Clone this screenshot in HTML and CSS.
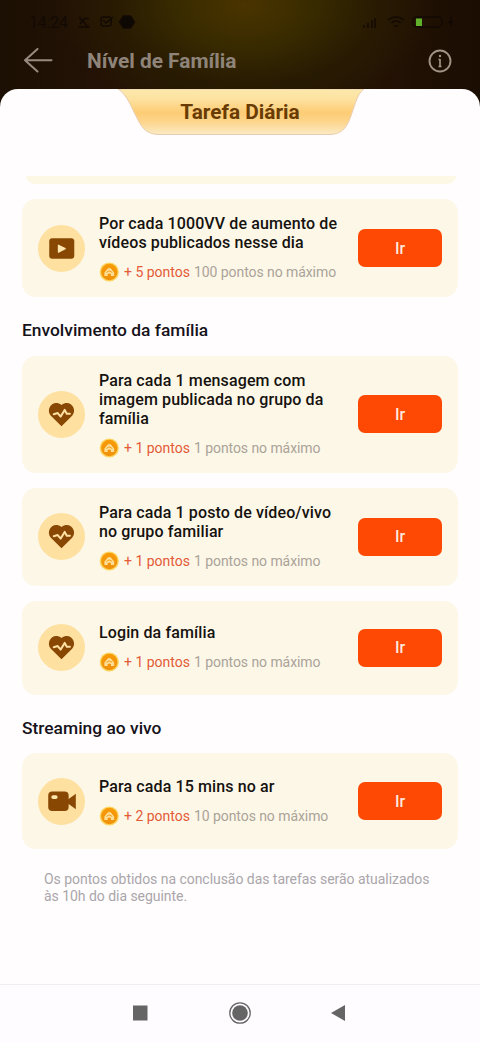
FILE: index.html
```html
<!DOCTYPE html>
<html lang="pt">
<head>
<meta charset="utf-8">
<title>Nível de Família</title>
<link rel="stylesheet" href="styles.css">
</head>
<body>
<svg class="defs" width="0" height="0">
  <defs>
    <linearGradient id="coin-fill" x1="0" y1="0" x2="0" y2="1"><stop offset="0" stop-color="#f99a08"/><stop offset="1" stop-color="#ef920c"/></linearGradient>
    <linearGradient id="tab-fill" x1="0" y1="0" x2="0" y2="1"><stop offset="0" stop-color="#fbe9ad"/><stop offset=".22" stop-color="#fde2a0"/><stop offset=".52" stop-color="#fdcc75"/><stop offset=".72" stop-color="#fdd58c"/><stop offset="1" stop-color="#fbebc4"/></linearGradient>
    <symbol id="coin" viewBox="0 0 20 20">
      <circle cx="10.3" cy="10" r="9.6" fill="#fbd45c"/>
      <circle cx="10.3" cy="10" r="8.2" fill="url(#coin-fill)"/>
      <path d="M5.4 14V10.6L8.8 6.6Q10.3 5.4 11.8 6.6L15.2 10.6V14H12V12.2Q10.3 10.6 8.6 12.2V14Z" fill="#ffdf98"/>
      <path d="M7.4 10.4Q10.3 7.4 13.2 10.4" fill="none" stroke="#f5a01c" stroke-width="1"/>
    </symbol>
    <symbol id="play" viewBox="0 0 46 46">
      <rect x="11" y="13" width="24.5" height="20" rx="3" fill="#894704"/>
      <path d="M20 19.8L26.6 23.1L20 26.6Z" fill="#ffe5ae" stroke="#ffe5ae" stroke-width="1.2" stroke-linejoin="round"/>
    </symbol>
    <symbol id="heart" viewBox="0 0 46 46">
      <path d="M23 34.5L12.6 24.2C6.9 18.1 14.8 7.4 23 13.8C31.2 7.4 39.1 18.1 33.4 24.2Z" fill="#894704"/>
      <path d="M15.4 22.8L19.3 21.6L22.2 25L26.1 18.5L28.2 22.2H31.2" fill="none" stroke="#ffe0a2" stroke-width="2" stroke-linejoin="round" stroke-linecap="round"/>
    </symbol>
    <symbol id="camera" viewBox="0 0 46 46">
      <rect x="10" y="13.3" width="20" height="19" rx="4" fill="#894704"/>
      <path d="M29 21.4L37 15.4V30.6L29 24.8Z" fill="#894704"/>
      <rect x="13" y="16.8" width="6.2" height="3.8" rx="1.9" fill="#ffe5ae"/>
    </symbol>
  </defs>
</svg>
<div class="screen">
  <header class="top">
    <div class="status">
      <span class="clock">14:24</span>
      <svg class="status-left" width="64" height="16" viewBox="0 0 64 16" fill="none" stroke="#130a04" stroke-width="1.5"><path d="M3 3l9 10M4 10q5-8 9-5M2 13h12"/><rect x="25" y="3" width="10" height="9" rx="2"/><path d="M27 6l3 3 7-6"/><path d="M47.500 2h7l4 6-4 6h-7l-4-6z" fill="#0e0804"/></svg>
      <svg class="status-right" width="96" height="16" viewBox="0 0 96 16" fill="none" stroke="#130a04" stroke-width="1.5"><path d="M4 14v-3M8 14V9M12 14V6M15 14V4"/><path d="M28 6q8-6 16 0M31 9q5-4 10 0M34 12h4"/><rect x="53" y="3" width="29" height="10" rx="4"/><rect x="56" y="4.5" width="6" height="7.5" fill="#61b02b" stroke="none"/><path d="M91 3v9M88 8h5"/></svg>
    </div>
    <div class="bar">
      <svg class="back" width="30" height="26" viewBox="0 0 30 26" fill="none" stroke="#988b80" stroke-width="2" stroke-linecap="round" stroke-linejoin="round"><path d="M14.5 1L2 12.2L14.5 23.5M2 12.2H28.5"/></svg>
      <h1 class="heading">Nível de Família</h1>
      <svg class="info" width="24" height="24" viewBox="0 0 24 24" fill="none" stroke="#a09384"><circle cx="12" cy="12" r="10.5" stroke-width="1.9"/><path d="M12 10V18M10.5 10.5H12M10.5 17.5H13.5" stroke-width="1.7"/><circle cx="12" cy="7" r="1.2" fill="#a09384" stroke="none"/></svg>
    </div>
  </header>
  <main class="sheet">
    <div class="tab">
      <svg class="tab-shape" width="248" height="47" viewBox="0 0 248 47"><path d="M1 0C10 5 15 20 22 33Q28 45 40 45.5H214Q226 45 231 34C237 22 239 5 247 0Z" fill="url(#tab-fill)" stroke="#e9cdb3" stroke-width="1"/></svg>
      <h2 class="tab-title">Tarefa Diária</h2>
    </div>
    <div class="list">
      <div class="card-tail"></div>
      <section class="card">
        <svg class="icon"><use href="#play"/></svg>
        <div class="body"><h3 class="title">Por cada 1000VV de aumento de<br>vídeos publicados nesse dia</h3><p class="points"><svg class="coin"><use href="#coin"/></svg><span class="gain">+ 5 pontos</span><span class="limit">100 pontos no máximo</span></p></div>
        <button class="go">Ir</button>
      </section>
      <h2 class="group">Envolvimento da família</h2>
      <section class="card">
        <svg class="icon"><use href="#heart"/></svg>
        <div class="body"><h3 class="title">Para cada 1 mensagem com<br>imagem publicada no grupo da<br>família</h3><p class="points"><svg class="coin"><use href="#coin"/></svg><span class="gain">+ 1 pontos</span><span class="limit">1 pontos no máximo</span></p></div>
        <button class="go">Ir</button>
      </section>
      <section class="card">
        <svg class="icon"><use href="#heart"/></svg>
        <div class="body"><h3 class="title">Para cada 1 posto de vídeo/vivo<br>no grupo familiar</h3><p class="points"><svg class="coin"><use href="#coin"/></svg><span class="gain">+ 1 pontos</span><span class="limit">1 pontos no máximo</span></p></div>
        <button class="go">Ir</button>
      </section>
      <section class="card">
        <svg class="icon"><use href="#heart"/></svg>
        <div class="body"><h3 class="title">Login da família</h3><p class="points"><svg class="coin"><use href="#coin"/></svg><span class="gain">+ 1 pontos</span><span class="limit">1 pontos no máximo</span></p></div>
        <button class="go">Ir</button>
      </section>
      <h2 class="group">Streaming ao vivo</h2>
      <section class="card">
        <svg class="icon"><use href="#camera"/></svg>
        <div class="body"><h3 class="title">Para cada 15 mins no ar</h3><p class="points"><svg class="coin"><use href="#coin"/></svg><span class="gain">+ 2 pontos</span><span class="limit">10 pontos no máximo</span></p></div>
        <button class="go">Ir</button>
      </section>
      <p class="note">Os pontos obtidos na conclusão das tarefas serão atualizados<br>às 10h do dia seguinte.</p>
    </div>
  </main>
  <nav class="nav">
    <svg width="24" height="24" viewBox="0 0 24 24"><rect x="4" y="4.5" width="14.5" height="15" fill="#656565"/></svg>
    <svg width="24" height="24" viewBox="0 0 24 24"><circle cx="12" cy="12" r="10.2" fill="none" stroke="#656565" stroke-width="1.3"/><circle cx="12" cy="12" r="7.8" fill="#656565"/></svg>
    <svg width="24" height="24" viewBox="0 0 24 24"><path d="M4 12L18 4V20Z" fill="#656565"/></svg>
  </nav>
</div>
</body>
</html>
```
FILE: styles.css
```css
* { box-sizing: border-box; margin: 0; padding: 0; }
body { font-family: Roboto, sans-serif; background: #1b0e02; }
.defs { position: absolute; }
.screen {
  width: 480px; height: 1042px; display: flex; flex-direction: column; overflow: hidden;
  background: radial-gradient(ellipse 190px 115px at 245px 5px, #4a3400 0%, #392b00 35%, #281b02 68%, rgba(30,16,2,0) 100%), linear-gradient(90deg, #1b1003, #241205 22%, #241a02 50%, #241204 78%, #1a0d02);
}
.top { height: 89px; flex: none; }
.status { height: 44px; display: flex; align-items: center; padding: 0 24px 0 29px; }
.clock { font-size: 16px; color: #130a04; letter-spacing: -.2px; }
.status-left { margin-left: 8px; }
.status-right { margin-left: auto; }
.bar { height: 34px; display: flex; align-items: center; padding: 0 28px 0 23px; }
.heading { margin-left: 34px; flex: 1; font-size: 20.9px; font-weight: 700; line-height: 24px; color: #8f847a; white-space: nowrap; }
.sheet { flex: 1; background: #fffdfe; border-radius: 18px 18px 0 0; display: flex; flex-direction: column; overflow: hidden; }
.tab { width: 248px; height: 47px; margin-left: 117px; display: grid; flex: none; }
.tab-shape, .tab-title { grid-area: 1 / 1; }
.tab-title { font-size: 20.8px; line-height: 46px; font-weight: 700; text-align: center; color: #693b03; padding-right: 2px; }
.list { margin-top: 40px; padding: 0 22px; display: flex; flex-direction: column; }
.card-tail { height: 8px; margin: 0 2px 15px 4px; flex: none; background: #fdf8e6; border-radius: 0 0 10px 10px / 0 0 8px 8px; }
.card { min-height: 94px; padding: 15px 16px; display: flex; align-items: center; background: #fdf7e8; border-radius: 14px; }
.card + .card { margin-top: 15px; }
.card:last-of-type { min-height: 96px; }
.icon { width: 47px; height: 47px; flex: none; border-radius: 50%; background: #fee0a0; }
.body { flex: 1; margin-left: 14px; min-width: 0; }
.title { font-size: 16px; letter-spacing: .12px; line-height: 19px; font-weight: 500; color: #15120f; white-space: nowrap; }
.points { margin-top: 10px; height: 20px; display: flex; align-items: center; font-size: 14px; white-space: nowrap; }
.coin { width: 20px; height: 20px; margin-right: 5px; }
.gain { color: #e35a37; margin-right: 4px; }
.limit { color: #aaa398; letter-spacing: -.07px; }
.go { width: 84px; height: 38px; flex: none; border: 0; border-radius: 7px; background: #fd4904; color: #ffe9dd; font: 500 16px Roboto, sans-serif; }
.group { height: 58.5px; line-height: 67px; font-size: 17.4px; font-weight: 500; color: #15121a; }
.note { margin: 22px 0 0 22px; font-size: 14px; letter-spacing: -.04px; line-height: 16.5px; color: #aaa6aa; white-space: nowrap; }
.nav { height: 58px; flex: none; background: #fefcff; border-top: 1px solid #eeedf0; display: flex; justify-content: center; align-items: center; gap: 75px; padding-bottom: 1px; }
```
